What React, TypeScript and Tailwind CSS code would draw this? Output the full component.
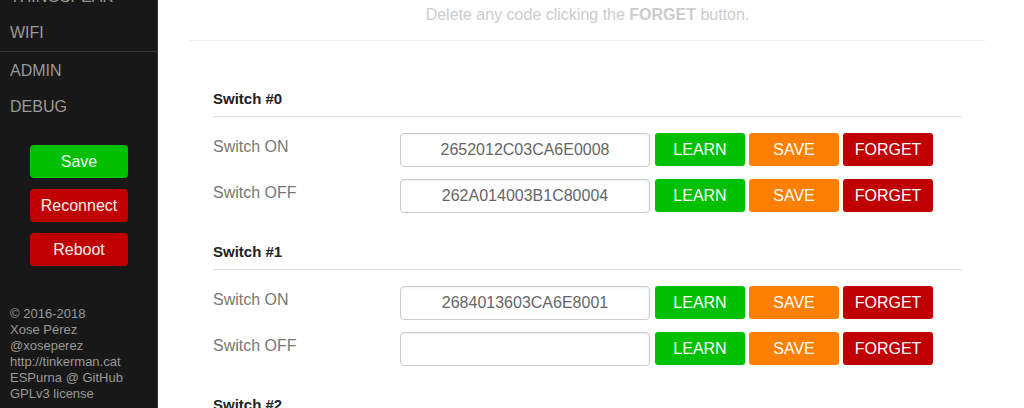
const menu = ['THINGSPEAK', 'WIFI'];
const menu2 = ['ADMIN', 'DEBUG'];

const switches = [
  { on: '2652012C03CA6E0008', off: '262A014003B1C80004' },
  { on: '2684013603CA6E8001', off: '' },
  { on: '', off: '' },
];

function Row({ label, value }: { label: string; value: string }) {
  return (
    <div className="flex items-start h-[34px]">
      <label className="w-[187px] shrink-0 pt-[4px] leading-[20px] text-[#777]">{label}</label>
      <input
        readOnly
        value={value}
        className="w-[250px] h-[34px] border border-[#ccc] rounded-[4px] text-center text-[#666] text-[16px] shadow-[inset_0_1px_2px_#eee] outline-none"
      />
      <div className="flex gap-[4px] ml-[5px]">
        <button className="w-[90px] h-[33px] rounded-[3px] bg-[#00c000] text-white">LEARN</button>
        <button className="w-[90px] h-[33px] rounded-[3px] bg-[#ff8000] text-white">SAVE</button>
        <button className="w-[90px] h-[33px] rounded-[3px] bg-[#c00000] text-white">FORGET</button>
      </div>
    </div>
  );
}

export default function App() {
  return (
    <div className="flex h-[408px] overflow-hidden bg-white font-['Liberation_Sans',Arial,sans-serif] text-[16px]">
      <aside className="w-[158px] shrink-0 bg-[#191818] border-r border-[#3a3a3a] overflow-hidden">
        <nav className="-mt-[21px]">
          {menu.map((m) => (
            <div key={m} className="h-[36px] px-[10px] py-[8px] leading-[20px] text-[#999]">{m}</div>
          ))}
          <div className="border-t border-[#333]">
            {menu2.map((m) => (
              <div key={m} className="h-[36px] px-[10px] py-[9px] leading-[20px] text-[#999]">{m}</div>
            ))}
          </div>
        </nav>
        <div className="flex flex-col gap-[11px] pl-[30px] mt-[21px]">
          <button className="w-[98px] h-[33px] rounded-[4px] bg-[#00c000] text-[#eee]">Save</button>
          <button className="w-[98px] h-[33px] rounded-[4px] bg-[#c00000] text-[#eee]">Reconnect</button>
          <button className="w-[98px] h-[33px] rounded-[4px] bg-[#c00000] text-[#eee]">Reboot</button>
        </div>
        <div className="mt-[40px] px-[10px] text-[13px] leading-[16px] text-[#999]">
          <div>© 2016-2018</div>
          <div>Xose Pérez</div>
          <div>@xoseperez</div>
          <div>http://tinkerman.cat</div>
          <div>ESPurna @ GitHub</div>
          <div>GPLv3 license</div>
        </div>
      </aside>

      <main className="flex-1 pl-[32px] pr-[39px]">
        <div className="h-[41px] pt-[5px] leading-[20px] border-b border-[#eee] text-center text-[#ccc]">
          Delete any code clicking the <strong className="font-bold">FORGET</strong> button.
        </div>
        {switches.map((s, i) => (
          <section key={i} className={`px-[23px] ${i === 0 ? 'mt-[48px]' : 'mt-[29px]'}`}>
            <h3 className="h-[28px] leading-[20px] font-bold text-[15px] text-[#222] border-b border-[#ddd]">
              Switch #{i}
            </h3>
            <div className="flex flex-col gap-[12px] mt-[16px]">
              <Row label="Switch ON" value={s.on} />
              <Row label="Switch OFF" value={s.off} />
            </div>
          </section>
        ))}
      </main>
    </div>
  );
}
